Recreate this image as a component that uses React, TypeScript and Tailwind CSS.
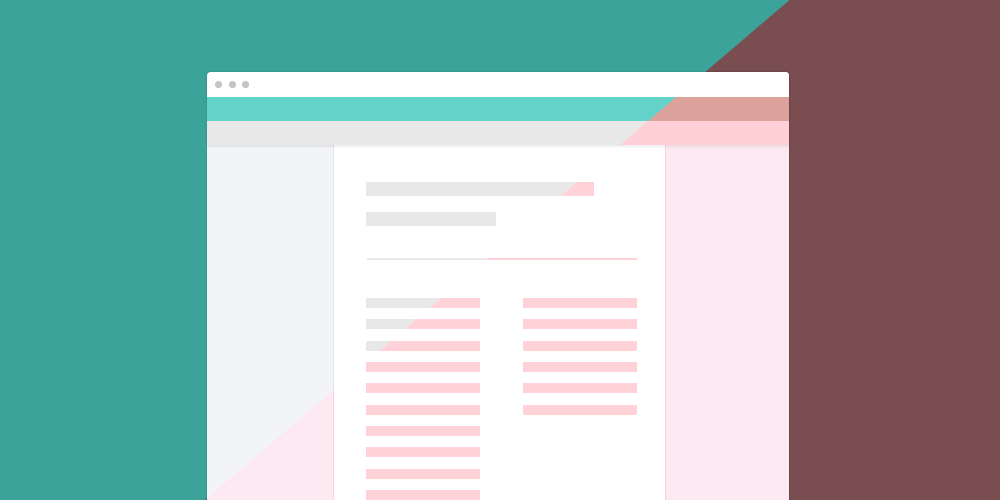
type Tone = "base" | "pink";

const palette = {
  base: {
    header: "bg-[#63d2c9]",
    toolbar: "bg-[#e8e8e8]",
    side: "bg-[#f3f4f8]",
    line: "border-[#e4e5ea]",
    bar: "bg-[#e8e8e8]",
  },
  pink: {
    header: "bg-[#dba39c]",
    toolbar: "bg-[#ffd1d7]",
    side: "bg-[#fde9f2]",
    line: "border-[#ffd0da]",
    bar: "bg-[#ffd2d7]",
  },
};

// the diagonal that splits the teal/grey half from the brown/pink half
const diagonal = "[clip-path:polygon(789.5px_0,1000px_0,1000px_500px,205px_500px)]";

function Lines({ count, bar }: { count: number; bar: string }) {
  return (
    <div className="flex w-[114px] flex-col gap-[11.33px]">
      {Array.from({ length: count }).map((_, i) => (
        <div key={i} className={`h-[10px] w-full ${bar}`} />
      ))}
    </div>
  );
}

function BrowserWindow({ tone }: { tone: Tone }) {
  const c = palette[tone];
  return (
    <div className="h-[500px] w-[1000px] overflow-hidden pl-[207px] pt-[72px]">
      <div className="flex w-[582px] flex-col overflow-hidden rounded-t-[4px] shadow-[0_0_2px_rgba(0,0,0,0.18)]">
        {/* title bar */}
        <div className="flex h-[25px] items-center gap-[6.5px] bg-white pl-[8px]">
          <span className="h-[7px] w-[7px] rounded-full bg-[#c4c4c4]" />
          <span className="h-[7px] w-[7px] rounded-full bg-[#c4c4c4]" />
          <span className="h-[7px] w-[7px] rounded-full bg-[#c4c4c4]" />
        </div>
        <div className={`h-[24px] ${c.header}`} />
        <div className={`relative z-10 h-[24px] shadow-[0_2px_2px_rgba(0,0,0,0.07)] ${c.toolbar}`} />

        {/* body */}
        <div className="flex h-[400px]">
          <div className={`w-[127px] border-r ${c.line} ${c.side}`} />
          <div className="w-[331px] bg-white pl-[32px] pt-[37px]">
            <div className={`h-[14px] w-[228px] ${c.bar}`} />
            <div className={`mt-[16px] h-[14px] w-[130px] ${c.bar}`} />
            <div className={`ml-[1px] mt-[32px] h-[2px] w-[270px] ${c.bar}`} />
            <div className="mt-[38px] flex gap-[43px]">
              <Lines count={10} bar={c.bar} />
              <Lines count={6} bar={c.bar} />
            </div>
          </div>
          <div className={`w-[124px] border-l ${c.line} ${c.side}`} />
        </div>
      </div>
    </div>
  );
}

export default function App() {
  return (
    <div className="relative isolate h-[500px] w-[1000px] overflow-hidden bg-[#3ba39a]">
      <div className={`absolute inset-0 -z-10 bg-[#7a4e51] ${diagonal}`} />
      <BrowserWindow tone="base" />
      <div className={`absolute inset-0 z-20 ${diagonal}`}>
        <BrowserWindow tone="pink" />
      </div>
    </div>
  );
}
